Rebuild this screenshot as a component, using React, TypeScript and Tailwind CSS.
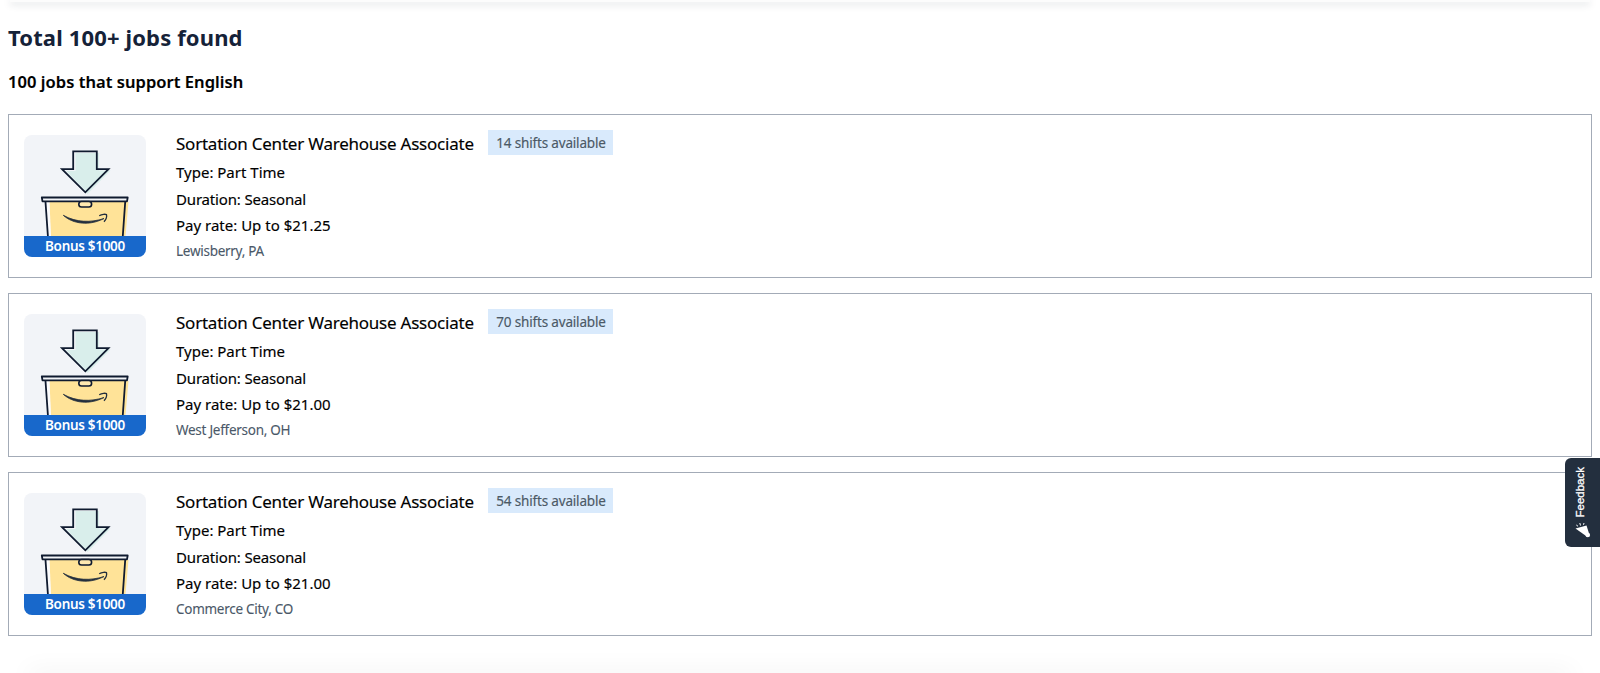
const jobs = [
    { id: '1', title: 'Sortation Center Warehouse Associate', shifts: 14, type: 'Part Time', duration: 'Seasonal', pay: '$21.25', location: 'Lewisberry, PA', bonus: '$1000' },
    { id: '2', title: 'Sortation Center Warehouse Associate', shifts: 70, type: 'Part Time', duration: 'Seasonal', pay: '$21.00', location: 'West Jefferson, OH', bonus: '$1000' },
    { id: '3', title: 'Sortation Center Warehouse Associate', shifts: 54, type: 'Part Time', duration: 'Seasonal', pay: '$21.00', location: 'Commerce City, CO', bonus: '$1000' },
];

const BoxArt = () => (
    <svg viewBox="0 0 122 101" className="block h-[101px] w-[122px]" fill="none">
        {/* Arrow */}
        <path d="M51.500 18H75V35.500H86.500L63.500 59L42 36H51.500Z" fill="#d9eeeb" />
        <path d="M49.200 16.300H72.800V34.200H84.500L61.300 57.300L38 34.200H49.200Z" stroke="#0f1a2f" strokeWidth="1.800" />
        {/* Box */}
        <path d="M25.300 67H104.500L101.500 101H26.500Z" fill="#ffe398" />
        <path d="M21.500 67H25.500L27 101H24.500Z" fill="#fbfbfd" />
        <path d="M17.800 62.500H103.700L103 66.300H18.500Z" fill="#f2f4f8" stroke="#0f1a2f" strokeWidth="1.800" strokeLinejoin="round" />
        <path d="M21.500 67L23.900 101M101.200 67L98.800 101" stroke="#0f1a2f" strokeWidth="1.800" />
        <rect x="54.800" y="66.500" width="12.800" height="5.500" rx="2.700" fill="#ffe9b0" stroke="#0f1a2f" strokeWidth="1.600" />
        {/* Smile */}
        <path d="M39.300 80.300C49 89.300 66 91 80 83.500C67 87.800 52 87.500 39.300 80.300Z" fill="#232f3e" stroke="#232f3e" strokeWidth="0.800" strokeLinejoin="round" />
        <path d="M75.200 80.800C78 79 81.500 79 82.500 79.600C83 81.500 82 84.500 80 86.700" stroke="#232f3e" strokeWidth="1.300" />
    </svg>
);

const JobCard = ({ job }: { job: (typeof jobs)[number] }) => (
    <div className="flex h-[164px] gap-[30px] border border-[#a3abb7] pl-[15px] pt-5">
        <div className="h-[122px] w-[122px] shrink-0 overflow-hidden rounded-lg bg-[#f2f4f8]">
            <BoxArt />
            <div className="h-[21px] bg-[#1868cb] text-center text-[13.5px] font-semibold leading-[21px] tracking-[-0.3px] text-white">
                Bonus {job.bonus}
            </div>
        </div>
        <div className="-mt-[5px]">
            <div className="flex items-start">
                <h3 className="w-[312px] whitespace-nowrap pt-0.5 text-[17px] leading-[24px] tracking-[-0.23px] [-webkit-text-stroke:0.15px]">{job.title}</h3>
                <span className="h-[25px] w-[125px] bg-[#d9eafc] pl-px pt-px text-center text-[13.5px] leading-[25px] tracking-[-0.17px] text-[#4b5966] [-webkit-text-stroke:0.15px]">
                    {job.shifts} shifts available
                </span>
            </div>
            <div className="mt-[3px] text-[15px] leading-[26.6px] [-webkit-text-stroke:0.15px]">
                <p>Type: {job.type}</p>
                <p className="tracking-[-0.17px]">Duration: {job.duration}</p>
                <p>Pay rate: Up to {job.pay}</p>
            </div>
            <p className="text-[13.5px] leading-[25px] tracking-[-0.27px] text-[#4a5868] [-webkit-text-stroke:0.1px]">{job.location}</p>
        </div>
    </div>
);

const FeedbackTab = () => (
    <button className="fixed right-0 top-[458px] flex h-[89px] w-[35px] flex-col items-center gap-1 rounded-l-md bg-[#232f3e] pr-[3px] pt-[9px] text-white">
        <span className="rotate-180 font-['Liberation_Sans',sans-serif] text-[11.5px] leading-none [-webkit-text-stroke:0.3px] [writing-mode:vertical-rl]">Feedback</span>
        <svg viewBox="0 0 16 17" className="ml-1 h-[17px] w-4" fill="none">
            <path d="M0.500 6.500L11.500 3.500L14.500 13L12.500 15Z" fill="white" />
            <circle cx="12.800" cy="13" r="2.300" fill="white" />
            <path d="M3 4.300L1.300 3M5.500 3.500L4.800 1M8.500 2.800L9 1" stroke="white" strokeWidth="1" />
        </svg>
    </button>
);

export default function App() {
    return (
        <div className="flex h-[673px] flex-col overflow-hidden bg-white font-['Noto_Sans',sans-serif] text-black">
            {/* Shadow of the header above */}
            <div className="mx-2.5 h-0.5 shrink-0 bg-[#fcfcfc] shadow-[0_2px_7px_rgba(35,47,62,0.25)]" />
            <main className="flex-1 px-2 pt-5">
                <h1 className="text-[22px] font-bold leading-[30px] tracking-[0.14px] text-[#152238]">Total 100+ jobs found</h1>
                <h2 className="mt-[18px] text-[16.5px] font-semibold leading-6 tracking-[0.05px] [-webkit-text-stroke:0.15px]">100 jobs that support English</h2>
                <div className="mt-5 space-y-[15px]">
                    {jobs.map((job) => (
                        <JobCard key={job.id} job={job} />
                    ))}
                </div>
            </main>
            {/* Shadow of the footer below */}
            <div className="mx-8 h-px shrink-0 translate-y-1 shadow-[0_0_24px_4px_rgba(0,0,0,0.08)]" />
            <FeedbackTab />
        </div>
    );
}
